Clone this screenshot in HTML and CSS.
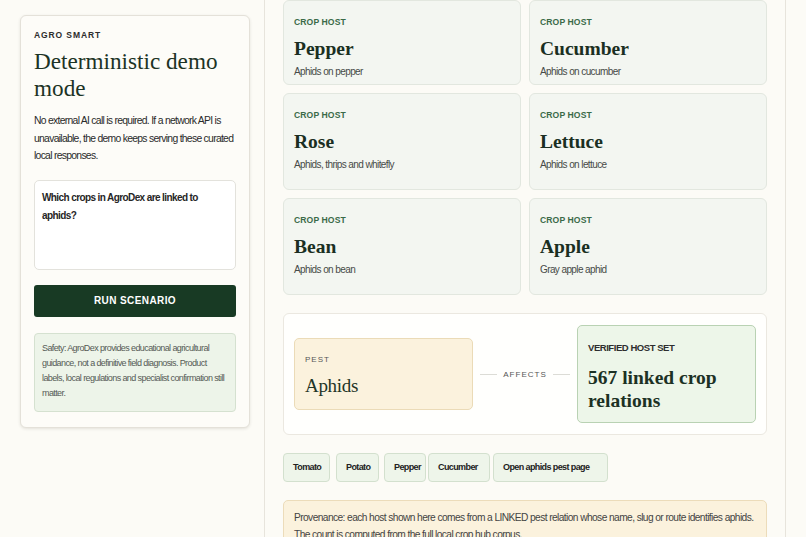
FILE: index.html
```html
<!DOCTYPE html>
<html lang="en">
<head>
<meta charset="utf-8">
<title>AgroDex – Agro Smart demo</title>
<link rel="stylesheet" href="styles.css">
</head>
<body>
<div class="layout">
  <aside class="sidebar">
    <section class="demo-card">
      <div class="eyebrow">AGRO SMART</div>
      <h1 class="demo-title">Deterministic demo mode</h1>
      <p class="lead">No external AI call is required. If a network API is unavailable, the demo keeps serving these curated local responses.</p>
      <div class="prompt">Which crops in AgroDex are linked to aphids?</div>
      <button class="run-btn" type="button">RUN SCENARIO</button>
      <div class="safety">Safety: AgroDex provides educational agricultural guidance, not a definitive field diagnosis. Product labels, local regulations and specialist confirmation still matter.</div>
    </section>
  </aside>

  <main class="results">
    <div class="host-grid">
      <article class="host-card">
        <div class="host-tag">CROP HOST</div>
        <h2 class="host-name">Pepper</h2>
        <p class="host-note">Aphids on pepper</p>
      </article>
      <article class="host-card">
        <div class="host-tag">CROP HOST</div>
        <h2 class="host-name">Cucumber</h2>
        <p class="host-note">Aphids on cucumber</p>
      </article>
      <article class="host-card">
        <div class="host-tag">CROP HOST</div>
        <h2 class="host-name">Rose</h2>
        <p class="host-note">Aphids, thrips and whitefly</p>
      </article>
      <article class="host-card">
        <div class="host-tag">CROP HOST</div>
        <h2 class="host-name">Lettuce</h2>
        <p class="host-note">Aphids on lettuce</p>
      </article>
      <article class="host-card">
        <div class="host-tag">CROP HOST</div>
        <h2 class="host-name">Bean</h2>
        <p class="host-note">Aphids on bean</p>
      </article>
      <article class="host-card">
        <div class="host-tag">CROP HOST</div>
        <h2 class="host-name">Apple</h2>
        <p class="host-note">Gray apple aphid</p>
      </article>
    </div>

    <section class="relation">
      <div class="pest-box">
        <div class="pest-label">PEST</div>
        <div class="pest-name">Aphids</div>
      </div>
      <div class="connector">
        <span class="connector-line"></span>
        <span class="connector-text">AFFECTS</span>
        <span class="connector-line"></span>
      </div>
      <div class="host-set">
        <div class="host-set-label">VERIFIED HOST SET</div>
        <div class="host-set-count">567 linked crop relations</div>
      </div>
    </section>

    <nav class="chips">
      <a class="chip chip-tomato">Tomato</a>
      <a class="chip chip-potato">Potato</a>
      <a class="chip chip-pepper">Pepper</a>
      <a class="chip chip-cucumber">Cucumber</a>
      <a class="chip chip-link">Open aphids pest page</a>
    </nav>

    <div class="provenance">Provenance: each host shown here comes from a LINKED pest relation whose name, slug or route identifies aphids. The count is computed from the full local crop hub corpus.</div>
  </main>
</div>
</body>
</html>
```

FILE: styles.css
```css
* {
  box-sizing: border-box;
}

html,
body {
  margin: 0;
  height: 537px;
  overflow: hidden;
  background: #fcfbf6;
  font-family: "Liberation Sans", Arial, sans-serif;
  color: #2b2b2b;
}

.layout {
  display: grid;
  grid-template-columns: 265px 521px 1fr;
  height: 537px;
}

/* ---------- sidebar ---------- */

.sidebar {
  border-right: 1px solid #e7e4dc;
  padding: 15px 15px 0 20px;
}

.demo-card {
  width: 230px;
  background: #fdfcf8;
  border: 1px solid #e4e1d9;
  border-radius: 6px;
  box-shadow: 0 1px 3px rgba(60, 50, 30, 0.12);
  padding: 13px 13px 15px;
}

.eyebrow {
  font-size: 8.5px;
  line-height: 12px;
  font-weight: 700;
  letter-spacing: 0.9px;
  color: #2c2c2c;
}

.demo-title {
  margin: 7px 0 0;
  font-family: "Liberation Serif", "Times New Roman", serif;
  font-weight: 400;
  font-size: 23.2px;
  line-height: 27px;
  color: #1c3325;
}

.lead {
  margin: 10px 0 0;
  font-size: 10.4px;
  line-height: 17.5px;
  letter-spacing: -0.72px;
  color: #2a2a2a;
}

.prompt {
  margin-top: 15px;
  height: 90px;
  background: #ffffff;
  border: 1px solid #e3e2dc;
  border-radius: 5px;
  padding: 8px 7px;
  font-size: 10px;
  line-height: 18px;
  letter-spacing: -0.6px;
  font-weight: 700;
  color: #262626;
}

.run-btn {
  display: block;
  width: 100%;
  margin-top: 15px;
  height: 32px;
  border: 0;
  border-radius: 3px;
  background: #183a24;
  color: #ffffff;
  font-family: "Liberation Sans", Arial, sans-serif;
  font-size: 10px;
  font-weight: 700;
  letter-spacing: 0.4px;
}

.safety {
  margin-top: 16px;
  background: #edf4e9;
  border: 1px solid #d5e1d0;
  border-radius: 4px;
  padding: 7px 7px 10px;
  font-size: 9px;
  line-height: 15px;
  letter-spacing: -0.6px;
  color: #555a55;
}

/* ---------- results column ---------- */

.results {
  border-right: 1px solid #e7e4dc;
  padding: 0 18px;
}

.host-grid {
  display: grid;
  grid-template-columns: 1fr 1fr;
  grid-template-rows: 85px 97px 97px;
  gap: 8px;
}

.host-card {
  background: #f3f6f1;
  border: 1px solid #e2e7df;
  border-radius: 6px;
  padding: 15px 10px 0;
}

.host-tag {
  font-size: 8.6px;
  line-height: 12px;
  font-weight: 700;
  letter-spacing: 0.1px;
  color: #3a6a48;
}

.host-name {
  margin: 9px 0 0;
  font-family: "Liberation Serif", "Times New Roman", serif;
  font-size: 19.5px;
  line-height: 24px;
  font-weight: 700;
  color: #1a2f22;
}

.host-note {
  margin: 5px 0 0;
  font-size: 10px;
  line-height: 12px;
  letter-spacing: -0.6px;
  color: #474a47;
}

.relation {
  margin-top: 18px;
  display: flex;
  align-items: center;
  background: #fffffd;
  border: 1px solid #ebe8e0;
  border-radius: 6px;
  padding: 11px 10px;
}

.pest-box {
  width: 179px;
  height: 72px;
  background: #fbf2dd;
  border: 1px solid #ebdbb7;
  border-radius: 5px;
  padding: 15px 10px 0;
}

.pest-label {
  font-size: 8px;
  line-height: 12px;
  letter-spacing: 1px;
  color: #575757;
}

.pest-name {
  margin-top: 8px;
  font-family: "Liberation Serif", "Times New Roman", serif;
  font-size: 19px;
  line-height: 24px;
  letter-spacing: -0.3px;
  color: #1f3527;
}

.connector {
  flex: 1;
  display: flex;
  align-items: center;
  justify-content: center;
  gap: 6px;
}

.connector-line {
  width: 17px;
  height: 1px;
  background: #dcdcd6;
}

.connector-text {
  font-size: 8px;
  letter-spacing: 1px;
  color: #555;
}

.host-set {
  width: 179px;
  height: 98px;
  background: #edf6e9;
  border: 1px solid #b9d2b3;
  border-radius: 5px;
  padding: 16px 10px 0;
}

.host-set-label {
  font-size: 9.5px;
  line-height: 12px;
  letter-spacing: -0.45px;
  font-weight: 700;
  color: #2e2e2e;
}

.host-set-count {
  margin-top: 12px;
  font-family: "Liberation Serif", "Times New Roman", serif;
  font-size: 19.5px;
  line-height: 23px;
  font-weight: 700;
  color: #1c3124;
}

.chips {
  margin-top: 18px;
  display: flex;
  height: 29px;
}

.chip {
  display: block;
  height: 29px;
  line-height: 27px;
  padding-left: 9px;
  background: #eef5ea;
  border: 1px solid #d3e0ce;
  border-radius: 4px;
  font-size: 9px;
  letter-spacing: -0.6px;
  font-weight: 700;
  color: #222;
}

.chip-tomato { width: 47px; }
.chip-potato { width: 43px; margin-left: 6px; }
.chip-pepper { width: 42px; margin-left: 5px; }
.chip-cucumber { width: 62px; margin-left: 2px; }
.chip-link { width: 115px; margin-left: 3px; }

.provenance {
  margin-top: 18px;
  background: #fbf2dd;
  border: 1px solid #ecdcba;
  border-radius: 5px;
  padding: 9px 10px;
  font-size: 10.2px;
  line-height: 16.5px;
  letter-spacing: -0.58px;
  color: #444;
}
```
